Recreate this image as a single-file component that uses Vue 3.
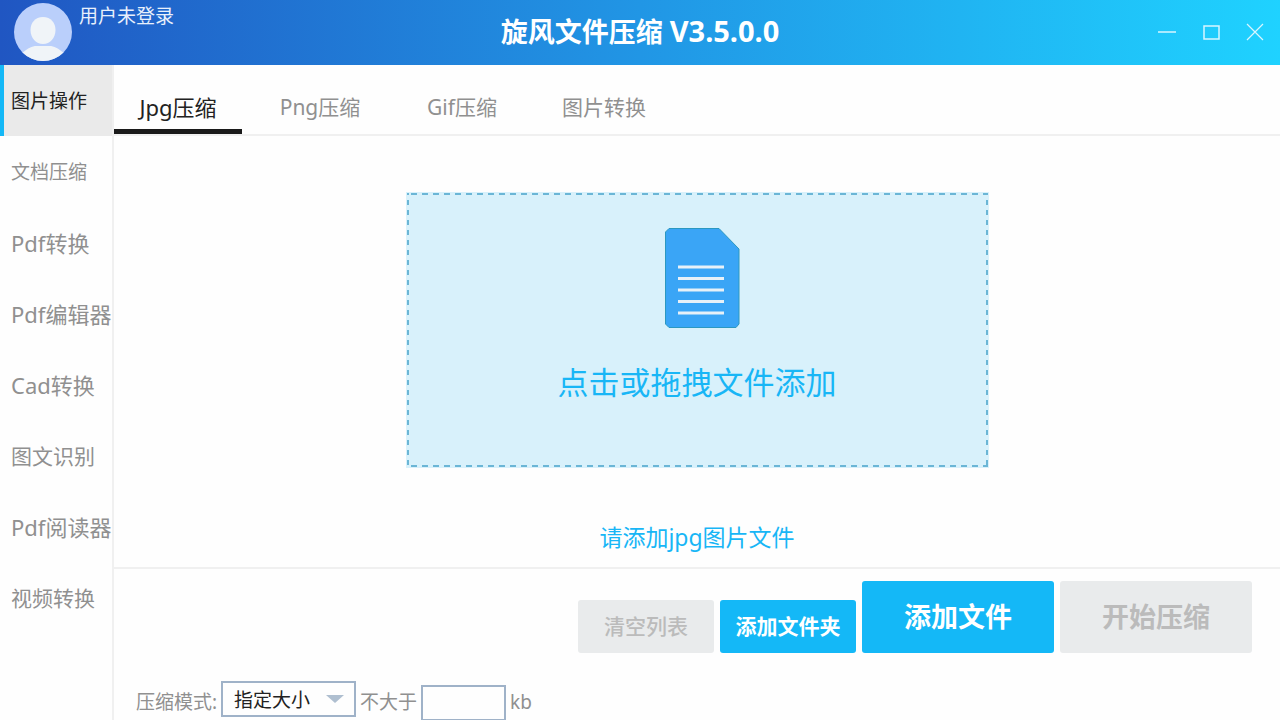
<script setup>
import { ref } from 'vue'

const sections = [
  { name: '图片操作', size: 'small' },
  { name: '文档压缩', size: 'small' },
  { name: 'Pdf转换', size: 'wide' },
  { name: 'Pdf编辑器', size: 'wide' },
  { name: 'Cad转换', size: 'wide' },
  { name: '图文识别', size: 'regular' },
  { name: 'Pdf阅读器', size: 'wide' },
  { name: '视频转换', size: 'regular' },
]
const tabs = ['Jpg压缩', 'Png压缩', 'Gif压缩', '图片转换']
const activeSection = ref(0)
const activeTab = ref(0)
const mode = ref('size')
const limit = ref('')
</script>

<template>
  <div class="app">
    <header class="titlebar">
      <div class="user">
        <svg class="avatar" viewBox="0 0 58 58" aria-hidden="true">
          <defs>
            <clipPath id="avatar-clip"><circle cx="29" cy="29" r="29" /></clipPath>
          </defs>
          <g clip-path="url(#avatar-clip)">
            <rect width="58" height="58" fill="#bacffb" />
            <path d="M29 14C21 14 16.500 20 16.500 27C16.500 35 22 41 29 41S41.500 35 41.500 27C41.500 20 37 14 29 14Z" fill="#f0f4f8" />
            <path d="M8 50C15 45 17 43 23 43H35C41 43 43 45 50 50V58H8Z" fill="#f0f4f8" />
          </g>
        </svg>
        <span class="username">用户未登录</span>
      </div>
      <h1>旋风文件压缩 <span class="version">V3.5.0.0</span></h1>
      <div class="window-controls">
        <button type="button" aria-label="最小化">
          <svg viewBox="0 0 18 18"><path d="M0 9H18" stroke-width="1.500" /></svg>
        </button>
        <button type="button" aria-label="最大化">
          <svg viewBox="0 0 18 18"><rect x="2" y="3" width="15" height="13" stroke-width="1.500" /></svg>
        </button>
        <button type="button" aria-label="关闭">
          <svg viewBox="0 0 18 18"><path d="M1 1L17 17M17 1L1 17" stroke-width="1.200" /></svg>
        </button>
      </div>
    </header>

    <div class="body">
      <nav class="sidebar">
        <button
          v-for="(s, i) in sections"
          :key="s.name"
          type="button"
          :class="['section', s.size, { active: i === activeSection }]"
          @click="activeSection = i"
        >{{ s.name }}</button>
      </nav>

      <main>
        <div class="tabs" role="tablist">
          <button
            v-for="(t, i) in tabs"
            :key="t"
            type="button"
            role="tab"
            :aria-selected="i === activeTab"
            :class="['tab', { active: i === activeTab }]"
            @click="activeTab = i"
          >{{ t }}</button>
        </div>

        <section class="workspace">
          <button type="button" class="dropzone">
            <svg class="file" viewBox="0 0 88 100" aria-hidden="true">
              <path d="M16 .5H66L86 21V96L83 99.500H16L12.500 96V4Z" fill="#3aa5f6" stroke="#2c98c0" />
              <path d="M25 39H71M25 50.500H71M25 62H71M25 73.500H71M25 85H71" stroke="#e8f1f8" stroke-width="3" />
            </svg>
            <span>点击或拖拽文件添加</span>
          </button>
          <p class="hint">请添加jpg图片文件</p>
        </section>

        <footer class="footer">
          <div class="actions">
            <button type="button" class="action muted" disabled>清空列表</button>
            <button type="button" class="action primary">添加文件夹</button>
            <button type="button" class="action large primary">添加文件</button>
            <button type="button" class="action large muted" disabled>开始压缩</button>
          </div>
          <form class="options" @submit.prevent>
            <label for="mode">压缩模式:</label>
            <div class="select-wrap">
              <select id="mode" v-model="mode">
                <option value="size">指定大小</option>
              </select>
              <svg class="arrow" viewBox="0 0 18 8" aria-hidden="true"><path d="M0 0H18L9 8Z" fill="#afbfd0" /></svg>
            </div>
            <label for="limit">不大于</label>
            <input id="limit" v-model="limit" type="text" />
            <span>kb</span>
          </form>
        </footer>
      </main>
    </div>
  </div>
</template>

<style>
body {
  margin: 0;
  background: #fff;
}
</style>

<style scoped>
.app {
  display: flex;
  flex-direction: column;
  height: 100vh;
  overflow: hidden;
  background: #fefefe;
  font-family: "Noto Sans", "Noto Sans CJK SC", sans-serif;
  font-size: 21px;
  line-height: 30px;
  color: #909090;
}
button, input, select {
  box-sizing: border-box;
  margin: 0;
  padding: 0;
  border: 0;
  background: none;
  font: inherit;
  color: inherit;
}
.titlebar {
  display: grid;
  grid-template-columns: 1fr auto 1fr;
  flex: none;
  height: 65px;
  background: linear-gradient(90deg, #2056c2, #2196e5 50%, #1fd2ff);
  color: #fff;
}
.user {
  display: flex;
  gap: 7px;
  padding: 3px 0 0 14px;
}
.avatar {
  width: 58px;
  height: 58px;
}
.username {
  font-size: 19px;
  line-height: 26px;
  color: #e8f0fc;
}
h1 {
  margin: 0;
  font-size: 27px;
  line-height: 62px;
  font-weight: 700;
}
.version {
  font-size: 29px;
}
.window-controls {
  display: flex;
  justify-content: flex-end;
  align-items: center;
  gap: 26px;
  padding: 0 16px 2px 0;
}
.window-controls svg {
  display: block;
  width: 18px;
  height: 18px;
  fill: none;
  stroke: #d8f6ff;
}
.body {
  display: flex;
  flex: 1;
  min-height: 0;
}
.sidebar {
  display: flex;
  flex-direction: column;
  flex: none;
  box-sizing: border-box;
  width: 114px;
  border-right: 2px solid #f0f0f0;
}
.section {
  flex: none;
  height: 71px;
  padding-left: 7px;
  border-left: 4px solid transparent;
  text-align: left;
  white-space: nowrap;
}
.section.small {
  font-size: 19px;
}
.section.wide {
  font-size: 22px;
}
.section.active {
  border-left-color: #14b8f7;
  background: #eaeaea;
  color: #222;
}
main {
  display: flex;
  flex-direction: column;
  flex: 1;
  min-width: 0;
}
.tabs {
  display: flex;
  flex: none;
  gap: 14px;
  height: 69px;
  border-bottom: 2px solid #f0f0f0;
}
.tab {
  width: 128px;
  padding-top: 20px;
  border-bottom: 5px solid transparent;
}
.tab.active {
  border-bottom-color: #1a1a1a;
  font-size: 22px;
  color: #222;
}
.workspace {
  display: flex;
  flex-direction: column;
  align-items: center;
  flex: 1;
  padding-top: 56px;
  color: #18b6f6;
}
.dropzone {
  --dash: #6bb6d6;
  display: flex;
  flex-direction: column;
  align-items: center;
  width: 50%;
  height: 276px;
  padding-top: 35px;
  border: 1px solid #d8f1fb;
  background-color: #d8f1fb;
  background-image:
    linear-gradient(90deg, transparent 5px, var(--dash) 5px),
    linear-gradient(90deg, transparent 5px, var(--dash) 5px),
    linear-gradient(transparent 5px, var(--dash) 5px),
    linear-gradient(transparent 5px, var(--dash) 5px);
  background-size: 11px 2px, 11px 2px, 2px 10px, 2px 10px;
  background-position: top, bottom, left, right;
  background-repeat: repeat-x, repeat-x, repeat-y, repeat-y;
  font-size: 31px;
  line-height: 46px;
}
.file {
  width: 88px;
  height: 100px;
  margin-bottom: 31px;
}
.hint {
  margin: 53px 0 0;
  font-size: 23px;
  line-height: 32px;
}
.footer {
  flex: none;
  height: 151px;
  border-top: 2px solid #f0f0f0;
}
.actions {
  display: flex;
  justify-content: flex-end;
  align-items: flex-end;
  gap: 6px;
  padding: 12px 28px 0 0;
}
.action {
  width: 136px;
  height: 53px;
  padding-bottom: 2px;
  border-radius: 3px;
  font-weight: 700;
}
.action.large {
  width: 192px;
  height: 72px;
  padding-bottom: 0;
  font-size: 27px;
}
.primary {
  background: #14b8f7;
  color: #fff;
}
.muted {
  background: #e9ebec;
  color: #bbb;
}
.muted:not(.large) {
  font-weight: 500;
}
.options {
  display: flex;
  align-items: flex-start;
  gap: 4px;
  padding: 28px 0 0 22px;
  font-size: 19px;
  line-height: 42px;
}
.select-wrap {
  position: relative;
}
select {
  display: block;
  appearance: none;
  width: 135px;
  height: 36px;
  padding: 2px 0 0 11px;
  border: 2px solid #9fb2c8;
  line-height: 30px;
  color: #222;
}
.arrow {
  position: absolute;
  top: 14px;
  right: 12px;
  width: 18px;
  height: 8px;
  pointer-events: none;
}
input {
  width: 85px;
  height: 36px;
  margin-top: 4px;
  border: 2px solid #9fb2c8;
}
</style>
